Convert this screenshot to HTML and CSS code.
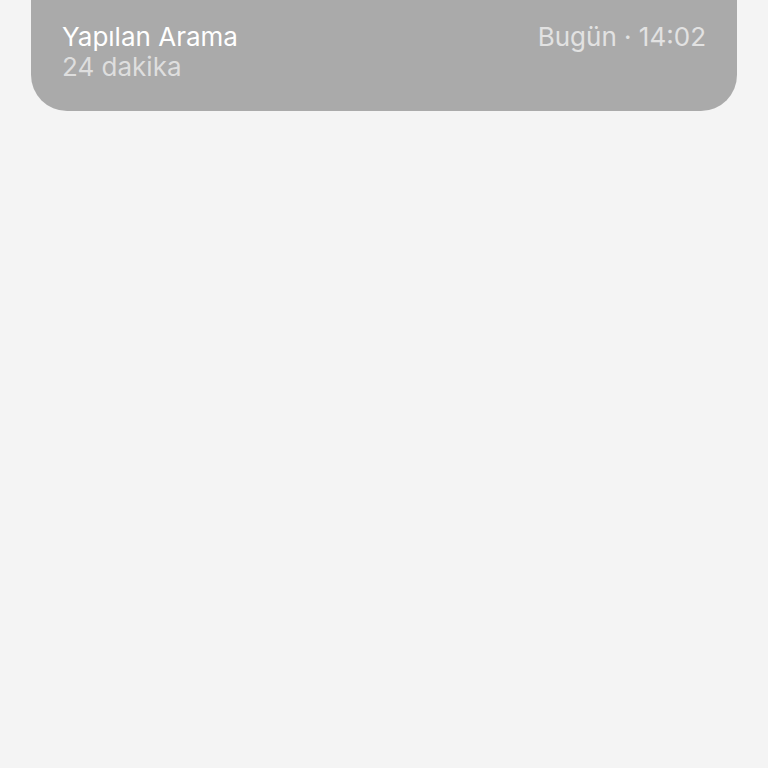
FILE: index.html
```html
<!DOCTYPE html>
<html lang="tr">
<head>
    <meta charset="UTF-8">
    <meta name="viewport" content="width=device-width, initial-scale=1.0">
    <title>Arama Geçmişi</title>
    <link rel="stylesheet" href="styles.css">
</head>
<body>
    <div class="call-card">
        <div class="call-info">
            <div class="call-type">Yapılan Arama</div>
            <div class="call-duration">24 dakika</div>
        </div>
        <div class="call-time">Bugün · 14:02</div>
    </div>
</body>
</html>
```

FILE: styles.css
```css
body {
    margin: 0;
    background-color: #f4f4f4;
    font-family: Inter, 'Noto Sans', 'Liberation Sans', sans-serif;
}
.call-card {
    display: flex;
    justify-content: space-between;
    align-items: flex-start;
    margin: 0 31px;
    padding: 22px 31px 29px 31px;
    background: #aaaaaa;
    border-radius: 0 0 36px 36px;
}
.call-type,
.call-duration,
.call-time {
    font-size: 26px;
    line-height: 30px;
}
.call-type {
    color: #ffffff;
}
.call-duration {
    color: #dedede;
}
.call-time {
    color: #e2e2e2;
}
```
